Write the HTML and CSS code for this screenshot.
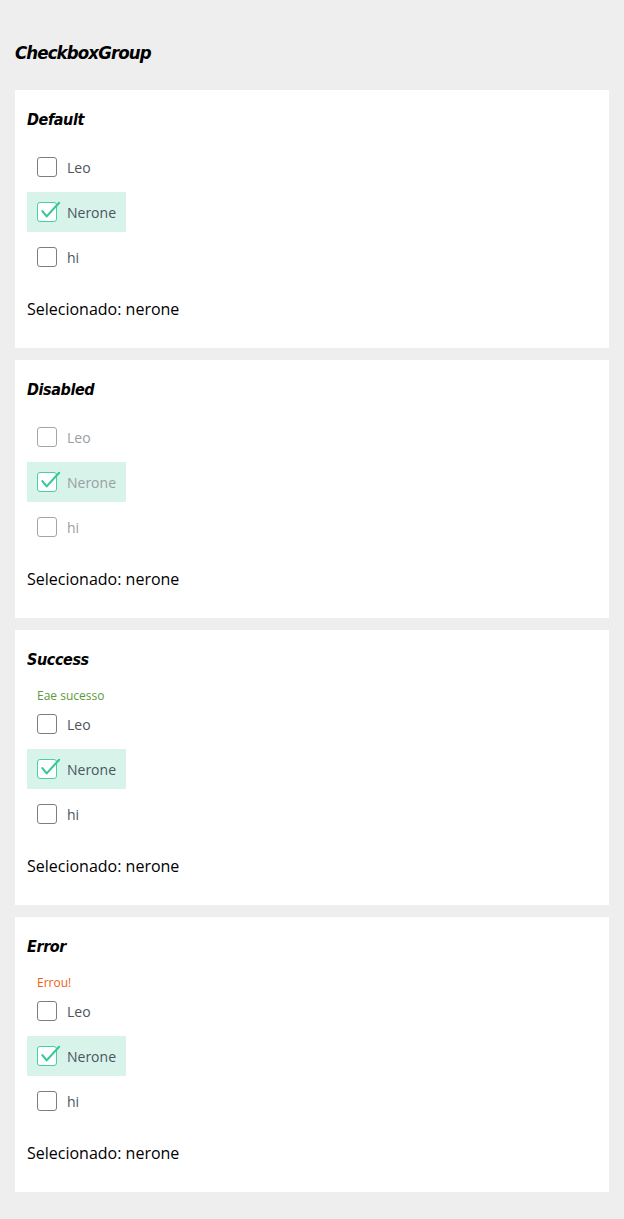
FILE: index.html
```html
<!DOCTYPE html>
<html>
<head>
<meta charset="utf-8">
<link rel="stylesheet" href="styles.css">
</head>
<body>
<h1 class="page-title">CheckboxGroup</h1>

<section class="card">
  <h2 class="card-title">Default</h2>
  <div class="group">
    <label class="option"><span class="box"></span><span class="text">Leo</span></label>
    <label class="option checked"><span class="box"><svg class="tick" viewBox="0 0 24 24"><path d="M3.5 9.5 L8 15 L21 0.8"/></svg></span><span class="text">Nerone</span></label>
    <label class="option"><span class="box"></span><span class="text">hi</span></label>
  </div>
  <p class="selected">Selecionado: nerone</p>
</section>

<section class="card disabled">
  <h2 class="card-title">Disabled</h2>
  <div class="group">
    <label class="option"><span class="box"></span><span class="text">Leo</span></label>
    <label class="option checked"><span class="box"><svg class="tick" viewBox="0 0 24 24"><path d="M3.5 9.5 L8 15 L21 0.8"/></svg></span><span class="text">Nerone</span></label>
    <label class="option"><span class="box"></span><span class="text">hi</span></label>
  </div>
  <p class="selected">Selecionado: nerone</p>
</section>

<section class="card">
  <h2 class="card-title">Success</h2>
  <div class="group">
    <div class="message success">Eae sucesso</div>
    <label class="option"><span class="box"></span><span class="text">Leo</span></label>
    <label class="option checked"><span class="box"><svg class="tick" viewBox="0 0 24 24"><path d="M3.5 9.5 L8 15 L21 0.8"/></svg></span><span class="text">Nerone</span></label>
    <label class="option"><span class="box"></span><span class="text">hi</span></label>
  </div>
  <p class="selected">Selecionado: nerone</p>
</section>

<section class="card">
  <h2 class="card-title">Error</h2>
  <div class="group">
    <div class="message error">Errou!</div>
    <label class="option"><span class="box"></span><span class="text">Leo</span></label>
    <label class="option checked"><span class="box"><svg class="tick" viewBox="0 0 24 24"><path d="M3.5 9.5 L8 15 L21 0.8"/></svg></span><span class="text">Nerone</span></label>
    <label class="option"><span class="box"></span><span class="text">hi</span></label>
  </div>
  <p class="selected">Selecionado: nerone</p>
</section>
</body>
</html>
```

FILE: styles.css
```css
html, body {
  margin: 0;
  padding: 0;
  background: #eeeeee;
}
body {
  padding: 39px 15px 27px;
  font-family: "Open Sans", "Noto Sans", sans-serif;
}
.page-title {
  margin: 0 0 23px;
  font-family: "DejaVu Sans", sans-serif;
  font-stretch: condensed;
  font-style: italic;
  font-weight: bold;
  font-size: 18.5px;
  line-height: 28px;
  color: #000;
  letter-spacing: -0.9px;
}
.card {
  background: #fff;
  padding: 13px 12px 12px;
  margin-bottom: 12px;
}
.card:last-child { margin-bottom: 0; }
.card-title {
  margin: 0;
  font-family: "DejaVu Sans", sans-serif;
  font-stretch: condensed;
  font-style: italic;
  font-weight: bold;
  font-size: 16px;
  line-height: 33px;
  color: #000;
  letter-spacing: -0.4px;
}
.group {
  margin-top: 11px;
  display: flex;
  flex-direction: column;
  align-items: flex-start;
  gap: 5px;
}
.message {
  font-size: 12px;
  line-height: 17px;
  padding-left: 10px;
  margin-bottom: -5px;
}
.message.success { color: #5b9a3c; }
.message.error { color: #ec5f0f; }
.option {
  display: flex;
  align-items: center;
  gap: 10px;
  height: 40px;
  padding: 0 10px;
  font-size: 14px;
  color: #4a5560;
}
.option.checked { background: #d8f3ea; }
.box {
  position: relative;
  width: 20px;
  height: 20px;
  box-sizing: border-box;
  border: 1px solid #7b7f83;
  border-radius: 3px;
  background: #fff;
}
.checked .box { border-color: #45d1a0; }
.tick {
  position: absolute;
  left: 1px;
  top: -1px;
  width: 23px;
  height: 23px;
  overflow: visible;
  fill: none;
  stroke: #37c894;
  stroke-width: 2.2;
  stroke-linecap: round;
  stroke-linejoin: round;
}
.disabled .option { color: #9a9ea2; }
.disabled .option .box { border-color: #a3a6a9; }
.disabled .option.checked .box { border-color: #45d1a0; }
.selected {
  margin: 21px 0 16px;
  font-size: 16px;
  line-height: 22px;
  color: #000;
}
```
